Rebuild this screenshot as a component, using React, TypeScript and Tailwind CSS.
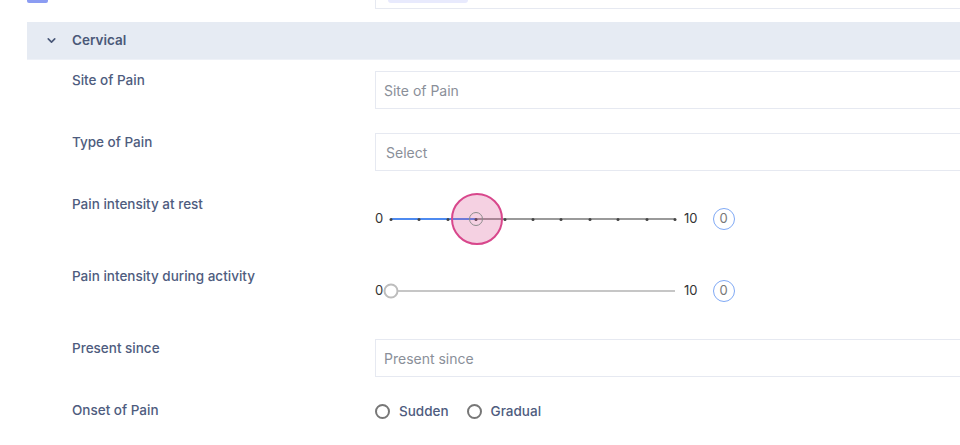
import { ChevronDown } from "lucide-react";

const labelCls = "text-[13.5px] leading-[18px] font-medium text-[#4e5c7e]";
const inputCls =
  "h-[38px] w-full border border-[#e6e9f1] bg-white pl-[8px] text-[14px] text-[#8a8f99] flex items-center";

function Row({ label, tall, children }: { label: string; tall?: boolean; children: React.ReactNode }) {
  return (
    <div className={`grid grid-cols-[303px_1fr] ${tall ? "h-[48px]" : "min-h-[38px]"}`}>
      <div className={labelCls}>{label}</div>
      <div>{children}</div>
    </div>
  );
}

function PainSlider({ pos, active }: { pos: number; active?: boolean }) {
  const ticks = Array.from({ length: 11 }, (_, i) => i);
  return (
    <div className="flex h-[48px] items-center text-[13px] text-[#333]">
      <span className="w-[16px]">0</span>
      <div className={`relative h-[2px] w-[284px] ${active ? "bg-[#9a9a9a]" : "bg-[#c6c6c6]"}`}>
        {active && (
          <>
            <div className="absolute left-0 top-0 h-[2px] bg-[#4d8af0]" style={{ width: `${pos}%` }} />
            {ticks.map((t) => (
              <div
                key={t}
                className="absolute top-[-0.5px] h-[3px] w-[3px] -translate-x-1/2 rounded-full bg-[#444]"
                style={{ left: `${t * 10}%` }}
              />
            ))}
            <div
              className="absolute top-1/2 h-[52px] w-[52px] -translate-x-1/2 -translate-y-1/2 rounded-full border-2 border-[#d8478c] bg-[#d8478c]/25"
              style={{ left: `calc(${pos}% + 1px)` }}
            />
            <div
              className="absolute top-1/2 h-[14px] w-[14px] -translate-x-1/2 -translate-y-1/2 rounded-full border-[1.5px] border-[#8c8c8c]"
              style={{ left: `${pos}%` }}
            />
          </>
        )}
        {!active && (
          <div className="absolute left-0 top-1/2 h-[15px] w-[15px] -translate-x-1/2 -translate-y-1/2 rounded-full border-2 border-[#bdbdbd] bg-white" />
        )}
      </div>
      <span className="ml-[9px]">10</span>
      <span className="ml-[15px] flex h-[22px] w-[22px] items-center justify-center rounded-full border-[1.5px] border-[#7fa9f5] text-[#777]">
        0
      </span>
    </div>
  );
}

function Radio({ label }: { label: string }) {
  return (
    <label className="flex items-center gap-[9px]">
      <span className="h-[15px] w-[15px] rounded-full border-2 border-[#777]" />
      <span className="text-[13.5px] font-medium text-[#4e5c7e]">{label}</span>
    </label>
  );
}

export default function App() {
  return (
    <div className="h-[445px] w-[960px] overflow-hidden bg-white font-['Inter',sans-serif]">
      <div className="w-[1100px]">
        <div className="flex h-[9px]">
          <div className="ml-[27px] h-[3px] w-[21px] rounded-b-[2px] bg-[#8b9cf2]" />
          <div className="ml-[327px] h-[9px] flex-1 border-b border-l border-[#e6e9f1] pl-[12px]">
            <div className="h-[3px] w-[80px] rounded-b-full bg-[#e8eafd]" />
          </div>
        </div>

        <div className="ml-[27px] mt-[13px]">
          <div className="flex h-[38px] items-center border-b border-[#eef1f7] bg-[#e6ebf3] pl-[18px]">
            <ChevronDown size={13} strokeWidth={3} className="text-[#4a5878]" />
            <span className="ml-[14px] text-[13.5px] font-semibold text-[#4a5878]">Cervical</span>
          </div>

          <div className="flex flex-col gap-[24px] pl-[45px] pt-[11px]">
            <Row label="Site of Pain">
              <div className={inputCls}>Site of Pain</div>
            </Row>
            <Row label="Type of Pain">
              <div className={`${inputCls} pl-[10px]`}>Select</div>
            </Row>
            <Row label="Pain intensity at rest" tall>
              <PainSlider pos={30} active />
            </Row>
            <Row label="Pain intensity during activity" tall>
              <PainSlider pos={0} />
            </Row>
            <Row label="Present since">
              <div className={inputCls}>Present since</div>
            </Row>
            <Row label="Onset of Pain">
              <div className="flex h-[21px] items-center gap-[18px]">
                <Radio label="Sudden" />
                <Radio label="Gradual" />
              </div>
            </Row>
          </div>
        </div>
      </div>
    </div>
  );
}
